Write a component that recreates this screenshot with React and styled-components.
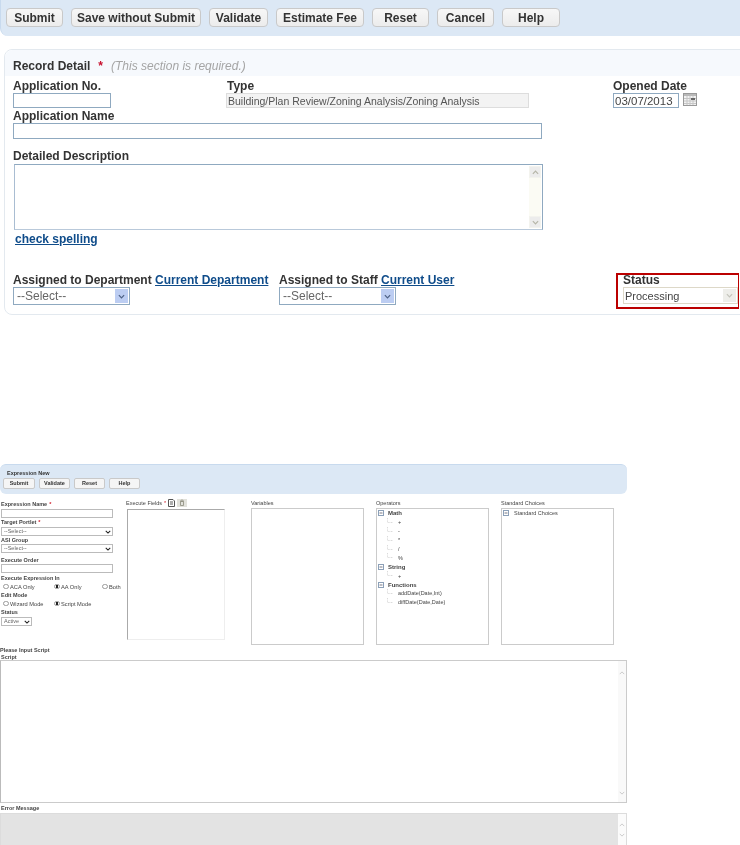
import React from "react";
import styled, { createGlobalStyle } from "styled-components";

const Global = createGlobalStyle`
  html, body { margin: 0; padding: 0; background: #fff; }
  #root { width: 740px; height: 845px; overflow: hidden; }
  * { box-sizing: border-box; }
`;

const Page = styled.div`
  width: 740px;
  height: 845px;
  overflow: hidden;
  font-family: "Liberation Sans", Arial, sans-serif;
  color: #333;
`;

const TopBar = styled.div`
  height: 36px;
  padding: 8px 0 0 5px;
  display: flex;
  gap: 8px;
  background: #dce8f5;
  border-left: 1px solid #c8daee;
  border-bottom-left-radius: 8px;
  filter: blur(0.3px);
`;

const TopButton = styled.div`
  width: ${(p) => p.$w}px;
  height: 19px;
  border: 1px solid #c9c9c9;
  border-radius: 4px;
  background: linear-gradient(#f7f7f7, #ececec);
  font-size: 12px;
  font-weight: bold;
  line-height: 18px;
  text-align: center;
  color: #333;
  white-space: nowrap;
`;

const RecordPanel = styled.section`
  width: 780px;
  height: 266px;
  margin: 13px 0 0 4px;
  border: 1px solid #e3e9ef;
  border-radius: 8px;
  filter: blur(0.3px);
`;

const RecordHeader = styled.div`
  height: 26px;
  padding: 5px 0 0 8px;
  display: flex;
  align-items: center;
  background: #f6f9fd;
  border-radius: 8px 0 0 0;
  font-size: 12px;
  font-weight: bold;
`;

const Star = styled.span`
  color: #c8102e;
  margin-left: 8px;
`;

const RequiredNote = styled.span`
  margin-left: 8px;
  font-weight: normal;
  font-style: italic;
  color: #a5a5a5;
`;

const RecordBody = styled.div`
  padding: 2px 0 0 8px;
`;

const TopRow = styled.div`
  display: flex;
`;

const TopField = styled.div`
  width: ${(p) => p.$w}px;
  flex: none;
`;

const TopLabel = styled.div`
  height: ${(p) => p.$h || 15}px;
  margin-top: ${(p) => p.$mt || 0}px;
  padding-top: ${(p) => p.$pt || 0}px;
  font-size: 12px;
  font-weight: bold;
  line-height: ${(p) => (p.$h || 15) - (p.$pt || 0)}px;
  color: #333;
  white-space: nowrap;
`;

const StatusLabel = styled(TopLabel)`
  line-height: 10px;
`;

const TextBox = styled.div`
  width: ${(p) => p.$w}px;
  height: ${(p) => p.$h}px;
  border: 1px solid #8fa9c0;
  background: #fff;
  font-size: 11.5px;
  line-height: 15px;
  padding-left: 1px;
  color: #444;
  overflow: hidden;
  white-space: nowrap;
`;

const ReadOnlyBox = styled.div`
  width: 303px;
  height: 15px;
  margin-left: -1px;
  border: 1px solid #ddd;
  background: #f3f3f3;
  font-size: 10.5px;
  line-height: 14px;
  padding-left: 1px;
  color: #555;
  white-space: nowrap;
`;

const DateRow = styled.div`
  display: flex;
  gap: 4px;
  align-items: flex-start;
`;

const AreaBox = styled.div`
  display: flex;
  justify-content: flex-end;
  width: 529px;
  height: 66px;
  margin-left: 1px;
  padding: 1px;
  border: 1px solid #8fa9c0;
  border-bottom-color: #b9c9da;
  border-left-color: #a9bdd2;
  background: #fff;
`;

const TopScroll = styled.div`
  width: 12px;
  display: flex;
  flex-direction: column;
  justify-content: space-between;
  background: #fbfbf4;
`;

const TopScrollButton = styled.div`
  height: 12px;
  display: flex;
  align-items: center;
  justify-content: center;
  background: #ececec;
  border: 1px solid #f3f3ee;
`;

const SpellLink = styled.a`
  display: block;
  margin: 2px 0 0 2px;
  height: 15px;
  font-size: 12px;
  font-weight: bold;
  line-height: 15px;
  color: #0f4c8a;
  text-decoration: underline;
`;

const AssignRow = styled.div`
  display: flex;
  margin-top: 26px;
`;

const AssignCol = styled.div`
  width: ${(p) => p.$w}px;
  flex: none;
`;

const Link = styled.a`
  color: #0f4c8a;
  text-decoration: underline;
`;

const BlueSelect = styled.div`
  width: 117px;
  height: 18px;
  display: flex;
  justify-content: space-between;
  padding: 1px 1px 1px 3px;
  border: 1px solid #8fa9c0;
  font-size: 12px;
  line-height: 15px;
  color: #666;
`;

const BlueArrow = styled.div`
  width: 13px;
  display: flex;
  align-items: center;
  justify-content: center;
  background: #bccdf2;
`;

const StatusBox = styled.div`
  width: 123px;
  height: 36px;
  margin-left: 1px;
  padding-left: 5px;
  border: 2px solid #bb0000;
  border-right-width: 1px;
`;

const StatusSelect = styled.div`
  width: 115px;
  height: 17px;
  display: flex;
  justify-content: space-between;
  padding: 1px;
  border: 1px solid #ddd8c8;
  font-size: 11px;
  line-height: 14px;
  color: #444;
`;

const StatusArrow = styled.div`
  width: 13px;
  display: flex;
  align-items: center;
  justify-content: center;
  background: #eeeeea;
`;

const Lower = styled.section`
  margin-top: 149px;
  filter: blur(0.35px);
`;

const ExprBar = styled.div`
  width: 627px;
  height: 30px;
  padding: 5px 0 0 3px;
  background: #dce8f5;
  border-top: 1px solid #c8daee;
  border-radius: 6px;
`;

const ExprTitle = styled.div`
  margin-left: 4px;
  height: 7px;
  font-size: 5.5px;
  font-weight: bold;
  line-height: 7px;
`;

const ExprButtons = styled.div`
  margin-top: 1px;
  display: flex;
  gap: 4px;
`;

const ExprButton = styled.div`
  width: ${(p) => p.$w}px;
  height: 11px;
  border: 1px solid #c9c9c9;
  border-radius: 2px;
  background: #f5f5f5;
  font-size: 5.5px;
  font-weight: bold;
  line-height: 9px;
  text-align: center;
`;

const ExprGrid = styled.div`
  display: grid;
  grid-template-columns: repeat(5, 125px);
  height: 147px;
  margin: 5px 0 0 1px;
`;

const Tiny = styled.div`
  height: ${(p) => p.$h}px;
  margin-top: ${(p) => p.$mt || 0}px;
  margin-left: ${(p) => p.$ml || 0}px;
  font-size: 5.5px;
  font-weight: ${(p) => (p.$bold ? "bold" : "normal")};
  line-height: ${(p) => p.$h}px;
  color: #444;
  white-space: nowrap;
`;

const TinyStar = styled.span`
  color: #d0202e;
  margin-left: 2px;
`;

const TinyInput = styled.div`
  width: 112px;
  height: 9px;
  border: 1px solid #bbb;
  background: #fff;
`;

const TinySelect = styled.div`
  width: ${(p) => p.$w || 112}px;
  height: 9px;
  margin-top: ${(p) => p.$mt || 0}px;
  display: flex;
  justify-content: space-between;
  align-items: center;
  padding: 0 1px 0 2px;
  border: 1px solid #bbb;
  font-size: 5.5px;
  line-height: 7px;
  color: #666;
`;

const RadioRow = styled.div`
  display: grid;
  grid-template-columns: 51px 48px auto;
  height: 9px;
  padding-left: 2px;
  align-items: center;
`;

const RadioItem = styled.div`
  display: flex;
  align-items: center;
  gap: 1.5px;
  font-size: 5.7px;
  color: #444;
  white-space: nowrap;
`;

const RadioDot = styled.span`
  width: 5.5px;
  height: 5.5px;
  flex: none;
  border-radius: 50%;
  border: 0.7px solid #999;
  background: ${(p) => (p.$on ? "radial-gradient(circle, #222 50%, #fff 60%)" : "#fff")};
`;

const LabelWithIcons = styled.div`
  display: flex;
  align-items: flex-start;
  gap: 2px;
  height: 10px;
`;

const ListBox = styled.div`
  width: ${(p) => p.$w}px;
  height: ${(p) => p.$h}px;
  margin-left: ${(p) => p.$ml || 0}px;
  padding-left: 1px;
  border: 1px solid #cbcbcb;
  background: #fff;
`;

const InsetListBox = styled(ListBox)`
  border-color: #aaaaaa #eeeeee #eeeeee #aaaaaa;
`;

const TreeRow = styled.div`
  height: 8.9px;
  display: flex;
  align-items: center;
  padding-left: ${(p) => (p.$leaf ? 8 : 0)}px;
  font-size: ${(p) => (p.$bold ? 6 : 5.5)}px;
  font-weight: ${(p) => (p.$bold ? "bold" : "normal")};
  color: #444;
  white-space: nowrap;
`;

const TreeGap = styled.span`
  margin-left: ${(p) => p.$w}px;
`;

const ScriptArea = styled.div`
  width: 627px;
  height: 143px;
  display: flex;
  justify-content: flex-end;
  border: 1px solid #cbcbcb;
  border-left-color: #bbb;
  background: #fff;
`;

const ErrorArea = styled(ScriptArea)`
  height: 32px;
  background: #e3e3e3;
  border-color: #dcdcdc;
  border-bottom: 0;
`;

const Scroll = styled.div`
  width: 8px;
  display: flex;
  flex-direction: column;
  justify-content: space-between;
  align-items: center;
  padding: 9px 0 6px;
  background: #f9f9f9;
`;

const ErrorScroll = styled(Scroll)`
  padding: 8px 0 7px;
  background: #fbfbfb;
`;

const Chevron = ({ up, color = "#4d6185", size = 7, width = 1.4 }) => (
  <svg width={size} height={size} viewBox="0 0 8 8" fill="none">
    <path
      d={up ? "M1 5.5L4 2.5L7 5.5" : "M1 2.5L4 5.5L7 2.5"}
      stroke={color}
      strokeWidth={width}
    />
  </svg>
);

const CalendarIcon = () => (
  <svg width="14" height="13" viewBox="0 0 14 13" fill="none">
    <rect x="0.5" y="0.5" width="13" height="12" fill="#f2f2f2" stroke="#999" />
    <rect x="1" y="1" width="12" height="2" fill="#b9b9b9" />
    <path d="M1 5.5H13M1 8H13M1 10.5H13M4 3V12M7 3V12M10 3V12" stroke="#c6c6c6" />
    <rect x="8" y="5" width="4" height="2" fill="#666" />
  </svg>
);

const FieldAddIcon = () => (
  <svg width="7" height="8" viewBox="0 0 7 8" fill="none">
    <path d="M0.5 0.5H5L6.5 2V7.5H0.5Z" fill="#fff" stroke="#555" />
    <path d="M2 3H5M2 5H5" stroke="#333" strokeWidth="0.8" />
  </svg>
);

const FieldDeleteIcon = () => (
  <svg width="10" height="8" viewBox="0 0 10 8" fill="none">
    <rect width="10" height="8" fill="#e2e2dc" />
    <path d="M3.5 2.5H6.5V6.5H3.5ZM3 2H7M4.3 1H5.7" stroke="#8c8c7c" strokeWidth="0.8" />
  </svg>
);

const Expander = () => (
  <svg width="6" height="6" viewBox="0 0 6 6" fill="none">
    <rect x="0.5" y="0.5" width="5" height="5" fill="#fff" stroke="#8ca0b8" />
    <path d="M1.5 3H4.5" stroke="#556" strokeWidth="0.8" />
  </svg>
);

const TreeLine = () => (
  <svg width="9" height="9" viewBox="0 0 9 9" fill="none">
    <path d="M1.5 0V4.5H7" stroke="#ccc" strokeWidth="0.7" strokeDasharray="1 0.6" />
  </svg>
);

const topButtons = [
  ["Submit", 57],
  ["Save without Submit", 130],
  ["Validate", 59],
  ["Estimate Fee", 88],
  ["Reset", 57],
  ["Cancel", 57],
  ["Help", 58],
];

const exprButtons = [
  ["Submit", 32],
  ["Validate", 31],
  ["Reset", 31],
  ["Help", 31],
];

const tree = [
  { label: "Math", bold: true },
  { label: "+" },
  { label: "-" },
  { label: "*" },
  { label: "/" },
  { label: "%" },
  { label: "String", bold: true },
  { label: "+" },
  { label: "Functions", bold: true },
  { label: "addDate(Date,Int)" },
  { label: "diffDate(Date,Date)" },
];

const Radio = ({ on, children }) => (
  <RadioItem>
    <RadioDot $on={on} />
    {children}
  </RadioItem>
);

export default function App() {
  return (
    <Page>
      <Global />
      <TopBar>
        {topButtons.map(([t, w]) => (
          <TopButton key={t} $w={w}>{t}</TopButton>
        ))}
      </TopBar>

      <RecordPanel>
        <RecordHeader>
          Record Detail
          <Star>*</Star>
          <RequiredNote>(This section is required.)</RequiredNote>
        </RecordHeader>
        <RecordBody>
          <TopRow>
            <TopField $w={214}>
              <TopLabel $pt={1}>Application No.</TopLabel>
              <TextBox $w={98} $h={15} />
            </TopField>
            <TopField $w={386}>
              <TopLabel $pt={1}>Type</TopLabel>
              <ReadOnlyBox>Building/Plan Review/Zoning Analysis/Zoning Analysis</ReadOnlyBox>
            </TopField>
            <TopField $w={100}>
              <TopLabel $pt={1}>Opened Date</TopLabel>
              <DateRow>
                <TextBox $w={66} $h={15}>03/07/2013</TextBox>
                <CalendarIcon />
              </DateRow>
            </TopField>
          </TopRow>
          <TopLabel $mt={2} $h={13}>Application Name</TopLabel>
          <TextBox $w={529} $h={16} />
          <TopLabel $mt={9} $h={16}>Detailed Description</TopLabel>
          <AreaBox>
            <TopScroll>
              <TopScrollButton><Chevron up color="#b5b5a8" /></TopScrollButton>
              <TopScrollButton><Chevron color="#b5b5a8" /></TopScrollButton>
            </TopScroll>
          </AreaBox>
          <SpellLink>check spelling</SpellLink>
          <AssignRow>
            <AssignCol $w={266}>
              <TopLabel $h={14}>Assigned to Department <Link>Current Department</Link></TopLabel>
              <BlueSelect>--Select--<BlueArrow><Chevron /></BlueArrow></BlueSelect>
            </AssignCol>
            <AssignCol $w={336}>
              <TopLabel $h={14}>Assigned to Staff <Link>Current User</Link></TopLabel>
              <BlueSelect>--Select--<BlueArrow><Chevron /></BlueArrow></BlueSelect>
            </AssignCol>
            <StatusBox>
              <StatusLabel $h={12}>Status</StatusLabel>
              <StatusSelect>
                Processing
                <StatusArrow><Chevron color="#c4c4bc" /></StatusArrow>
              </StatusSelect>
            </StatusBox>
          </AssignRow>
        </RecordBody>
      </RecordPanel>

      <Lower>
        <ExprBar>
          <ExprTitle>Expression New</ExprTitle>
          <ExprButtons>
            {exprButtons.map(([t, w]) => (
              <ExprButton key={t} $w={w}>{t}</ExprButton>
            ))}
          </ExprButtons>
        </ExprBar>

        <ExprGrid>
          <div>
            <Tiny $bold $h={10}>Expression Name<TinyStar>*</TinyStar></Tiny>
            <TinyInput />
            <Tiny $bold $h={9}>Target Portlet<TinyStar>*</TinyStar></Tiny>
            <TinySelect>--Select--<Chevron color="#222" size={6} /></TinySelect>
            <Tiny $bold $h={8}>ASI Group</Tiny>
            <TinySelect>--Select--<Chevron color="#222" size={6} /></TinySelect>
            <Tiny $bold $h={8} $mt={3}>Execute Order</Tiny>
            <TinyInput />
            <Tiny $bold $h={8} $mt={1}>Execute Expression In</Tiny>
            <RadioRow>
              <Radio>ACA Only</Radio>
              <Radio on>AA Only</Radio>
              <Radio>Both</Radio>
            </RadioRow>
            <Tiny $bold $h={8}>Edit Mode</Tiny>
            <RadioRow>
              <Radio>Wizard Mode</Radio>
              <Radio on>Script Mode</Radio>
            </RadioRow>
            <Tiny $bold $h={8}>Status</Tiny>
            <TinySelect $w={31} $mt={1}>Active<Chevron color="#222" size={6} /></TinySelect>
          </div>
          <div>
            <LabelWithIcons>
              <Tiny $h={9}>Execute Fields<TinyStar>*</TinyStar></Tiny>
              <FieldAddIcon />
              <FieldDeleteIcon />
            </LabelWithIcons>
            <InsetListBox $w={98} $h={131} $ml={1} />
          </div>
          <div>
            <Tiny $h={9}>Variables</Tiny>
            <ListBox $w={113} $h={137} />
          </div>
          <div>
            <Tiny $h={9}>Operators</Tiny>
            <ListBox $w={113} $h={137}>
              {tree.map((n, i) =>
                n.bold ? (
                  <TreeRow key={i} $bold>
                    <Expander />
                    <TreeGap $w={4}>{n.label}</TreeGap>
                  </TreeRow>
                ) : (
                  <TreeRow key={i} $leaf>
                    <TreeLine />
                    <TreeGap $w={3}>{n.label}</TreeGap>
                  </TreeRow>
                )
              )}
            </ListBox>
          </div>
          <div>
            <Tiny $h={9}>Standard Choices</Tiny>
            <ListBox $w={113} $h={137}>
              <TreeRow>
                <Expander />
                <TreeGap $w={5}>Standard Choices</TreeGap>
              </TreeRow>
            </ListBox>
          </div>
        </ExprGrid>

        <Tiny $bold $h={8}>Please Input Script</Tiny>
        <Tiny $bold $h={6} $ml={1}>Script</Tiny>
        <ScriptArea>
          <Scroll>
            <Chevron up color="#bbb" size={6} width={1} />
            <Chevron color="#bbb" size={6} width={1} />
          </Scroll>
        </ScriptArea>
        <Tiny $bold $h={10} $ml={1}>Error Message</Tiny>
        <ErrorArea>
          <ErrorScroll>
            <Chevron up color="#bbb" size={6} width={1} />
            <Chevron color="#bbb" size={6} width={1} />
          </ErrorScroll>
        </ErrorArea>
      </Lower>
    </Page>
  );
}
